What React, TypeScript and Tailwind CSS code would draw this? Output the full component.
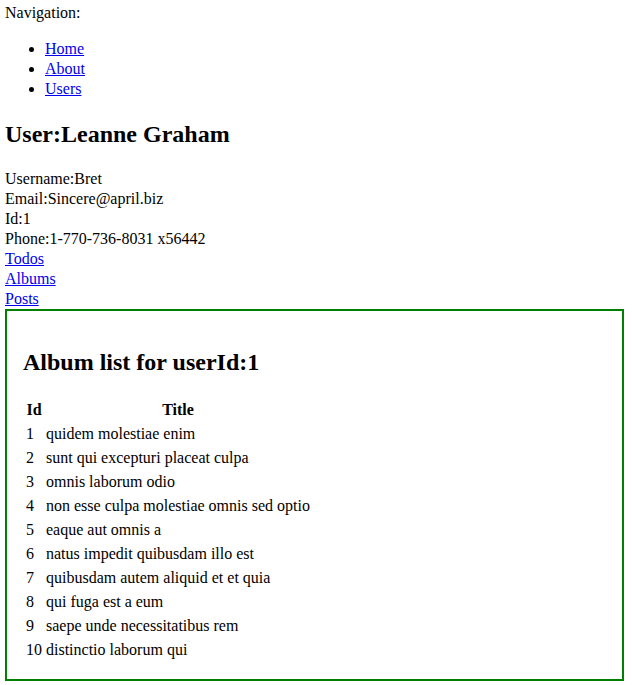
import React from "react";

const albums: [number, string][] = [
  [1, "quidem molestiae enim"],
  [2, "sunt qui excepturi placeat culpa"],
  [3, "omnis laborum odio"],
  [4, "non esse culpa molestiae omnis sed optio"],
  [5, "eaque aut omnis a"],
  [6, "natus impedit quibusdam illo est"],
  [7, "quibusdam autem aliquid et et quia"],
  [8, "qui fuga est a eum"],
  [9, "saepe unde necessitatibus rem"],
  [10, "distinctio laborum qui"],
];

const linkCls = "text-[#0000ee] underline";

export default function App() {
  return (
    <div
      className="bg-white text-black text-[16px] leading-[1.25] pt-[3px] pl-[5px] min-h-[685px]"
      style={{ fontFamily: '"Liberation Serif", "Times New Roman", serif' }}
    >
      <div>Navigation:</div>
      <ul className="list-disc pl-10 my-4">
        <li>
          <a href="#" className={linkCls}>Home</a>
        </li>
        <li>
          <a href="#" className={linkCls}>About</a>
        </li>
        <li>
          <a href="#" className={linkCls}>Users</a>
        </li>
      </ul>
      <h2 className="text-[24px] font-bold my-[0.83em]">User:Leanne Graham</h2>
      <div>Username:Bret</div>
      <div>Email:Sincere@april.biz</div>
      <div>Id:1</div>
      <div>Phone:1-770-736-8031 x56442</div>
      <div>
        <a href="#" className={linkCls}>Todos</a>
      </div>
      <div>
        <a href="#" className={linkCls}>Albums</a>
      </div>
      <div>
        <a href="#" className={linkCls}>Posts</a>
      </div>
      <div className="w-[619px] border-2 border-[#008000] p-4">
        <h2 className="text-[24px] font-bold my-[0.83em]">Album list for userId:1</h2>
        <table className="border-separate border-spacing-[2px]">
          <thead>
            <tr>
              <th className="p-[1px] font-bold text-center">Id</th>
              <th className="p-[1px] font-bold text-center">Title</th>
            </tr>
          </thead>
          <tbody>
            {albums.map(([id, title]) => (
              <tr key={id}>
                <td className="p-[1px] text-left">{id}</td>
                <td className="p-[1px] text-left">{title}</td>
              </tr>
            ))}
          </tbody>
        </table>
      </div>
    </div>
  );
}
